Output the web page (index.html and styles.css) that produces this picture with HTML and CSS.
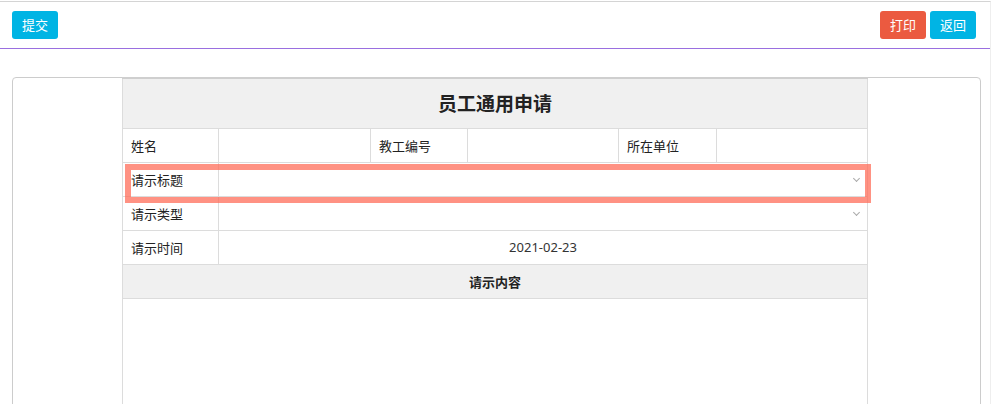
FILE: index.html
```html
<!DOCTYPE html>
<html lang="zh">
<head>
    <meta charset="UTF-8">
    <meta name="viewport" content="width=device-width, initial-scale=1.0">
    <title>员工通用申请</title>
    <link rel="stylesheet" href="styles.css">
</head>
<body>
    <div class="page">
        <div class="toolbar">
            <a href="#" class="btn btn-blue">提交</a>
            <div class="tool-right">
                <a href="#" class="btn btn-red">打印</a>
                <a href="#" class="btn btn-blue">返回</a>
            </div>
        </div>

        <div class="card">
            <div class="form-wrap">
                <table class="form">
                    <colgroup>
                        <col style="width:96px">
                        <col style="width:152px">
                        <col style="width:97px">
                        <col style="width:151px">
                        <col style="width:98px">
                        <col style="width:151px">
                    </colgroup>
                    <tr class="title-row">
                        <th colspan="6">员工通用申请</th>
                    </tr>
                    <tr>
                        <td class="label">姓名</td>
                        <td></td>
                        <td class="label">教工编号</td>
                        <td></td>
                        <td class="label">所在单位</td>
                        <td></td>
                    </tr>
                    <tr>
                        <td class="label">请示标题</td>
                        <td colspan="5" class="select"><span class="arrow"></span></td>
                    </tr>
                    <tr>
                        <td class="label">请示类型</td>
                        <td colspan="5" class="select"><span class="arrow"></span></td>
                    </tr>
                    <tr>
                        <td class="label">请示时间</td>
                        <td colspan="5" class="center">2021-02-23</td>
                    </tr>
                    <tr class="sub-head">
                        <th colspan="6">请示内容</th>
                    </tr>
                    <tr>
                        <td colspan="6" class="content"></td>
                    </tr>
                </table>
                <!-- 高亮提示框 -->
                <div class="highlight"></div>
            </div>
        </div>
    </div>
</body>
</html>
```

FILE: styles.css
```css
*{
    margin: 0;
    padding: 0;
    box-sizing: border-box;
}
body{
    background-color: #fff;
    font-family: "Noto Sans", "Noto Sans CJK SC", sans-serif;
    font-size: 13px;
    color: #333;
}
.page{
    width: 991px;
    height: 404px;
    margin-top: 1px;
    border-top: 1px solid #d4d4d4;
    border-right: 1px solid #eee;
    overflow: hidden;
}
.toolbar{
    display: flex;
    justify-content: space-between;
    align-items: flex-start;
    height: 47px;
    padding: 9px 14px 0 12px;
    border-bottom: 1px solid #9a6fe0;
}
.tool-right{
    display: flex;
    gap: 4px;
}
.btn{
    display: block;
    width: 46px;
    height: 28px;
    line-height: 28px;
    text-align: center;
    color: #fff;
    font-size: 13px;
    text-decoration: none;
    border-radius: 3px;
}
.btn-blue{
    background-color: #00b4e4;
}
.btn-red{
    background-color: #eb5a40;
}
.card{
    margin: 28px 0 0 12px;
    width: 969px;
    height: 400px;
    border: 1px solid #ccc;
    border-radius: 4px;
}
.form-wrap{
    position: relative;
    width: 745px;
    margin: -1px auto 0 109px;
}
.form{
    width: 745px;
    table-layout: fixed;
    border-collapse: collapse;
    border: 1px solid #d6d6d6;
}
.form td, .form th{
    border: 1px solid #dcdcdc;
    height: 34px;
    padding: 0 8px;
    text-align: left;
    font-weight: normal;
}
.title-row th{
    height: 50px;
    background-color: #f0f0f0;
    text-align: center;
    font-size: 19px;
    font-weight: bold;
    color: #222;
    border-top: 2px solid #cfcfcf;
}
.label{
    color: #222;
}
.select{
    position: relative;
}
.arrow{
    position: absolute;
    right: 8px;
    top: 13px;
    width: 5px;
    height: 5px;
    border-right: 1px solid #aaa;
    border-bottom: 1px solid #aaa;
    transform: rotate(45deg);
}
.center{
    text-align: center !important;
}
.sub-head th{
    background-color: #f0f0f0;
    text-align: center;
    font-weight: bold;
    color: #222;
}
.form td.content{
    height: 160px;
}
.highlight{
    position: absolute;
    left: 3px;
    top: 87px;
    width: 746px;
    height: 39px;
    border: 6px solid rgba(255, 110, 90, 0.75);
}
```
